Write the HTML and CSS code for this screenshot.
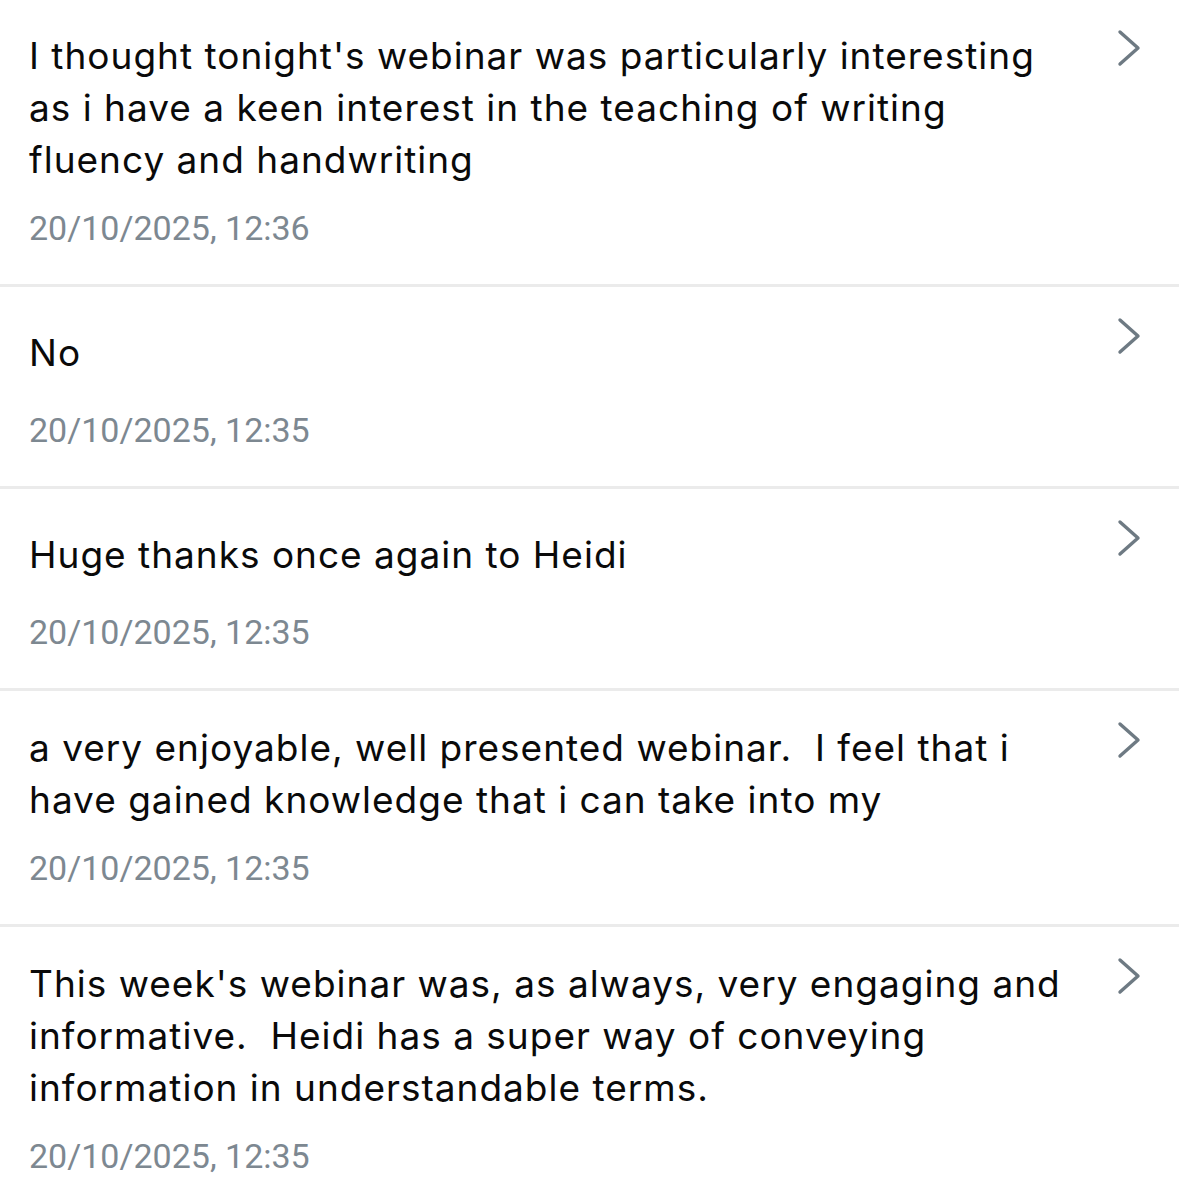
FILE: index.html
```html
<!DOCTYPE html>
<html lang="en">
<head>
<meta charset="utf-8">
<title>Responses</title>
<link rel="stylesheet" href="styles.css">
</head>
<body>
<ul class="responses">
  <li class="response">
    <div class="response-body">
      <p class="response-text">I thought tonight's webinar was particularly interesting as i have a keen interest in the teaching of writing fluency and handwriting</p>
      <p class="response-date">20/10/2025, 12:36</p>
    </div>
    <svg class="chevron" viewBox="0 0 24 38" aria-hidden="true"><path d="M3 3 L21 19 L3 35"/></svg>
  </li>
  <li class="response">
    <div class="response-body">
      <p class="response-text">No</p>
      <p class="response-date">20/10/2025, 12:35</p>
    </div>
    <svg class="chevron" viewBox="0 0 24 38" aria-hidden="true"><path d="M3 3 L21 19 L3 35"/></svg>
  </li>
  <li class="response">
    <div class="response-body">
      <p class="response-text">Huge thanks once again to Heidi</p>
      <p class="response-date">20/10/2025, 12:35</p>
    </div>
    <svg class="chevron" viewBox="0 0 24 38" aria-hidden="true"><path d="M3 3 L21 19 L3 35"/></svg>
  </li>
  <li class="response">
    <div class="response-body">
      <p class="response-text">a very enjoyable, well presented webinar.&nbsp; I feel that i have gained knowledge that i can take into my</p>
      <p class="response-date">20/10/2025, 12:35</p>
    </div>
    <svg class="chevron" viewBox="0 0 24 38" aria-hidden="true"><path d="M3 3 L21 19 L3 35"/></svg>
  </li>
  <li class="response">
    <div class="response-body">
      <p class="response-text">This week's webinar was, as always, very engaging and informative.&nbsp; Heidi has a super way of conveying information in understandable terms.</p>
      <p class="response-date">20/10/2025, 12:35</p>
    </div>
    <svg class="chevron" viewBox="0 0 24 38" aria-hidden="true"><path d="M3 3 L21 19 L3 35"/></svg>
  </li>
</ul>
</body>
</html>
```
FILE: styles.css
```css
html, body {
  margin: 0;
  padding: 0;
  background: #ffffff;
}

body {
  font-family: Inter, "Liberation Sans", Arial, sans-serif;
  color: #000000;
  overflow: hidden;
}

.responses {
  list-style: none;
  margin: -1px 0 0 0;
  padding: 0;
}

.response {
  display: flex;
  align-items: flex-start;
  padding: 31px 38px 36px 29px;
  border-bottom: 3px solid #ebebeb;
}

.response-body {
  flex: 1;
  min-width: 0;
  padding-right: 30px;
}

.response-text {
  margin: 0;
  font-size: 37px;
  line-height: 52px;
  letter-spacing: 1px;
  min-height: 70px;
  display: flex;
  align-items: center;
  color: #0a0a0a;
}

.response-date {
  margin: 22px 0 0 0;
  font-family: Roboto, "Liberation Sans", Arial, sans-serif;
  font-size: 34px;
  line-height: 40px;
  color: #7d8891;
}

.chevron {
  flex: none;
  width: 24px;
  height: 38px;
  margin-top: -1px;
  fill: none;
  stroke: #6e7a83;
  stroke-width: 3.4;
  stroke-linecap: round;
  stroke-linejoin: round;
}
```
